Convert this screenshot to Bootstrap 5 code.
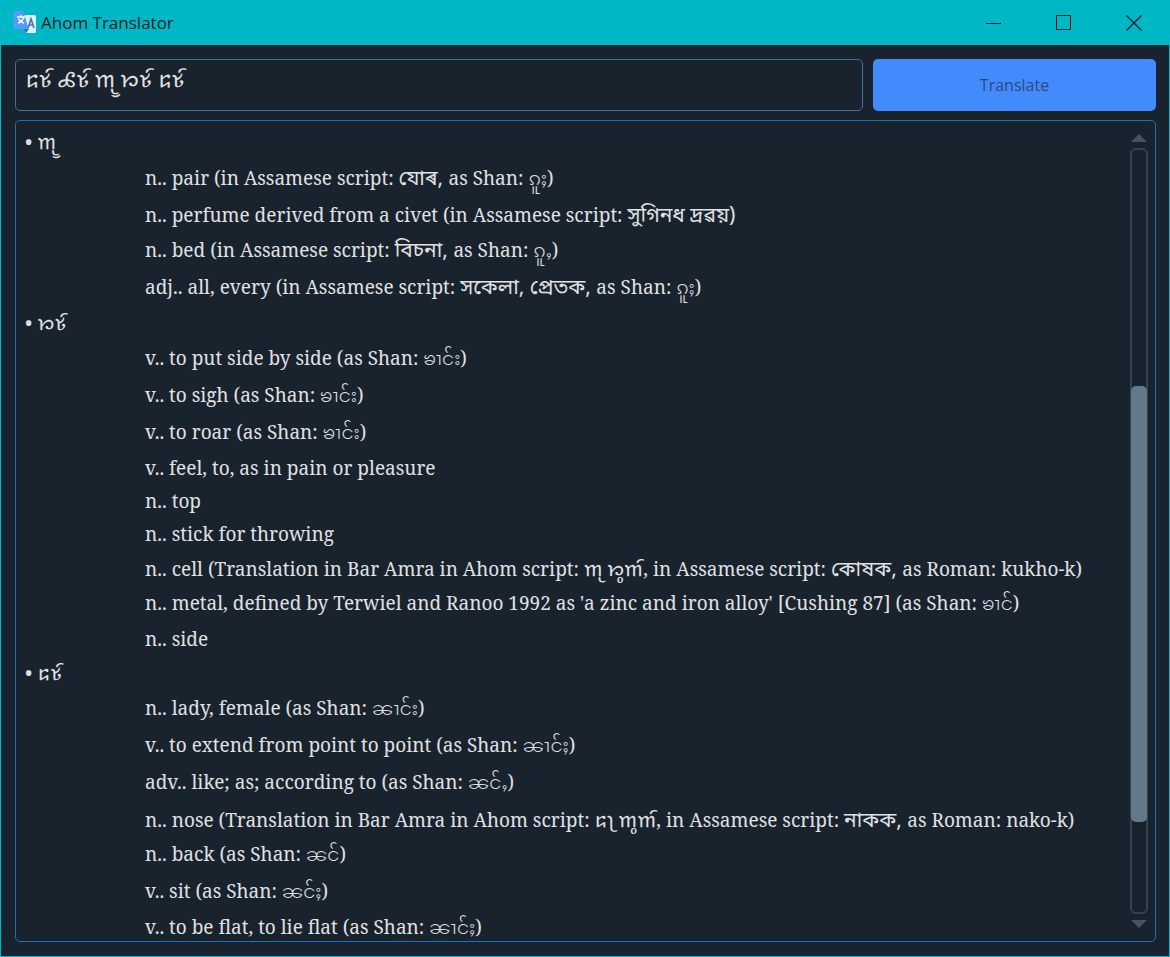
<!DOCTYPE html>
<html lang="en">
<head>
<meta charset="utf-8">
<meta name="viewport" content="width=device-width, initial-scale=1">
<title>Ahom Translator</title>
<link rel="stylesheet" href="https://cdn.jsdelivr.net/npm/bootstrap@5.3.0/dist/css/bootstrap.min.css">
<style>
  body { background: #19232d; color: #e0e1e3; font-family: "Noto Sans", "Open Sans", sans-serif; }
  .app-window { height: 100vh; border: 1px solid #00b7c6; }
  .title-bar { height: 44px; background: #00b7c6; color: #10242c; padding-left: 12px; }
  .title-bar h1 { font: 17px/24px "Open Sans", sans-serif; }
  .win-btn { width: 70px; height: 44px; color: #10181f; }
  .workspace { padding: 14px 13px 14px 14px; gap: 9px; }
  .query { gap: 10px; height: 52px; }
  .query .form-control { background: #19232d; color: #e0e1e3; border: 1px solid #40709c; border-radius: 5px; padding: 0 9px 3px; font: 22px "Noto Sans Ahom", "Noto Serif Ahom", "Noto Serif", serif; }
  .query .btn { width: 283px; background: #448aff; color: #2c4a78; border-radius: 5px; font: 16px "Open Sans", sans-serif; }
  .results { border: 1px solid #1a72bb; border-radius: 5px; padding: 4px 7px 0 9px; min-height: 0; }
  .entries { font: 19px/33px "Noto Serif", "Droid Serif", serif; white-space: nowrap; }
  .entries dt { font-size: 20px; font-weight: 400; padding-bottom: 2px; }
  .entries dd { margin: 0 0 0 120px; }
  .entries span { line-height: 1px; }
  [lang="aho"] { font-size: 20px; font-family: "Noto Serif Ahom", "Noto Serif", serif; }
  [lang="as"] { font-size: 21px; font-family: "Noto Sans Bengali", sans-serif; }
  [lang="shn"] { font-family: "Noto Sans Myanmar", sans-serif; font-weight: 300; }
  .has-bn { padding-top: 2px; }
  .has-shan { padding-top: 1px; padding-bottom: 3px; }
  .has-bn.has-shan { padding-top: 2px; padding-bottom: 2px; }
  .scroller { width: 18px; gap: 6px; padding: 9px 0 13px; }
  .track { border: 2px solid #37414f; border-radius: 6px; }
  .thumb { margin: 0 -1px; background: #60798b; border-radius: 5px; }
</style>
</head>
<body>
<div class="app-window d-flex flex-column overflow-hidden">
  <header class="title-bar d-flex align-items-center flex-shrink-0">
    <svg width="24" height="24" viewBox="0 0 24 24" aria-hidden="true">
      <path d="M10 4h11.500a1.500 1.500 0 0 1 1.500 1.500v15a1.500 1.500 0 0 1-1.500 1.500H13z" fill="#e4effa"/>
      <path d="M11 18h5l-3 4z" fill="#2d68d8"/>
      <path d="M2 0h8.500l5 18H2a1.500 1.500 0 0 1-1.500-1.500v-15A1.500 1.500 0 0 1 2 0z" fill="#569bf8"/>
      <path d="M4 6h8M8 4v2M5 12c3-1 5-3 6-6M5.500 7.500c1 2 3 4 5.500 4.500" fill="none" stroke="#fff" stroke-width="1.400"/>
      <path d="M15 17l3-9 3 9M16 14h4" fill="none" stroke="#3a7fb8" stroke-width="1.700"/>
    </svg>
    <h1 class="mb-0 ms-1 me-auto">Ahom Translator</h1>
    <button class="win-btn btn p-0 border-0" aria-label="Minimize"><svg class="d-block mx-auto" width="16" height="16"><path d="M0 8.500h15" stroke="currentColor"/></svg></button>
    <button class="win-btn btn p-0 border-0" aria-label="Maximize"><svg class="d-block mx-auto" width="16" height="16"><path d="M.5.5h14v14H.5z" fill="none" stroke="currentColor"/></svg></button>
    <button class="win-btn btn p-0 border-0" aria-label="Close"><svg class="d-block mx-auto" width="16" height="16"><path d="M.5.5l15 15M15.500.5l-15 15" stroke="currentColor" stroke-width="1.200"/></svg></button>
  </header>
  <main class="workspace d-flex flex-column flex-grow-1 overflow-hidden">
    <form class="query d-flex flex-shrink-0">
      <input class="form-control" type="text" aria-label="Ahom text" value="𑜃𑜂𑜫 𑜍𑜂𑜫 𑜀𑜥 𑜁𑜂𑜫 𑜃𑜂𑜫">
      <button class="btn border-0 flex-shrink-0" type="button">Translate</button>
    </form>
    <section class="results d-flex flex-grow-1">
      <dl class="entries mb-0 flex-grow-1 overflow-hidden">
        <dt>• <span lang="aho">𑜀𑜥</span></dt>
        <dd class="has-bn has-shan">n.. pair (in Assamese script: <span lang="as">যোৰ, </span>as Shan: <span lang="shn">ၵူႈ</span>)</dd>
        <dd class="has-bn">n.. perfume derived from a civet (in Assamese script: <span lang="as">সুগিনধ দ্ৰৱয়)</span></dd>
        <dd class="has-bn has-shan">n.. bed (in Assamese script: <span lang="as">বিচনা, </span>as Shan: <span lang="shn">ၵူႇ</span>)</dd>
        <dd class="has-bn has-shan">adj.. all, every (in Assamese script: <span lang="as">সকেলা, প্ৰেতক, </span>as Shan: <span lang="shn">ၵူႈ</span>)</dd>
        <dt>• <span lang="aho">𑜁𑜂𑜫</span></dt>
        <dd class="has-shan">v.. to put side by side (as Shan: <span lang="shn">ၶၢင်း</span>)</dd>
        <dd class="has-shan">v.. to sigh (as Shan: <span lang="shn">ၶၢင်း</span>)</dd>
        <dd class="has-shan">v.. to roar (as Shan: <span lang="shn">ၶၢင်း</span>)</dd>
        <dd>v.. feel, to, as in pain or pleasure</dd>
        <dd>n.. top</dd>
        <dd>n.. stick for throwing</dd>
        <dd class="has-bn">n.. cell (Translation in Bar Amra in Ahom script: <span lang="aho">𑜀𑜤 𑜁𑜨𑜀𑜫</span>, in Assamese script: <span lang="as">কোষক, </span>as Roman: kukho-k)</dd>
        <dd class="has-shan">n.. metal, defined by Terwiel and Ranoo 1992 as 'a zinc and iron alloy' [Cushing 87] (as Shan: <span lang="shn">ၶၢင်</span>)</dd>
        <dd>n.. side</dd>
        <dt>• <span lang="aho">𑜃𑜂𑜫</span></dt>
        <dd class="has-shan">n.. lady, female (as Shan: <span lang="shn">ၼၢင်း</span>)</dd>
        <dd class="has-shan">v.. to extend from point to point (as Shan: <span lang="shn">ၼၢင်ႈ</span>)</dd>
        <dd class="has-shan">adv.. like; as; according to (as Shan: <span lang="shn">ၼင်ႇ</span>)</dd>
        <dd class="has-bn">n.. nose (Translation in Bar Amra in Ahom script: <span lang="aho">𑜃𑜡 𑜀𑜨𑜀𑜫</span>, in Assamese script: <span lang="as">নাকক, </span>as Roman: nako-k)</dd>
        <dd class="has-shan">n.. back (as Shan: <span lang="shn">ၼင်</span>)</dd>
        <dd class="has-shan">v.. sit (as Shan: <span lang="shn">ၼင်ႈ</span>)</dd>
        <dd>v.. to be flat, to lie flat (as Shan: <span lang="shn">ၼၢင်ႈ</span>)</dd>
      </dl>
      <div class="scroller d-flex flex-column align-items-center flex-shrink-0" aria-hidden="true">
        <svg width="16" height="8"><path d="M0 8L8 0l8 8z" fill="#455364"/></svg>
        <div class="track w-100 flex-grow-1 d-flex flex-column">
          <div style="flex:236"></div><div class="thumb" style="flex:436"></div><div style="flex:90"></div>
        </div>
        <svg width="16" height="8"><path d="M0 0h16l-8 8z" fill="#455364"/></svg>
      </div>
    </section>
  </main>
</div>
<script src="https://cdn.jsdelivr.net/npm/bootstrap@5.3.0/dist/js/bootstrap.bundle.min.js"></script>
</body>
</html>
